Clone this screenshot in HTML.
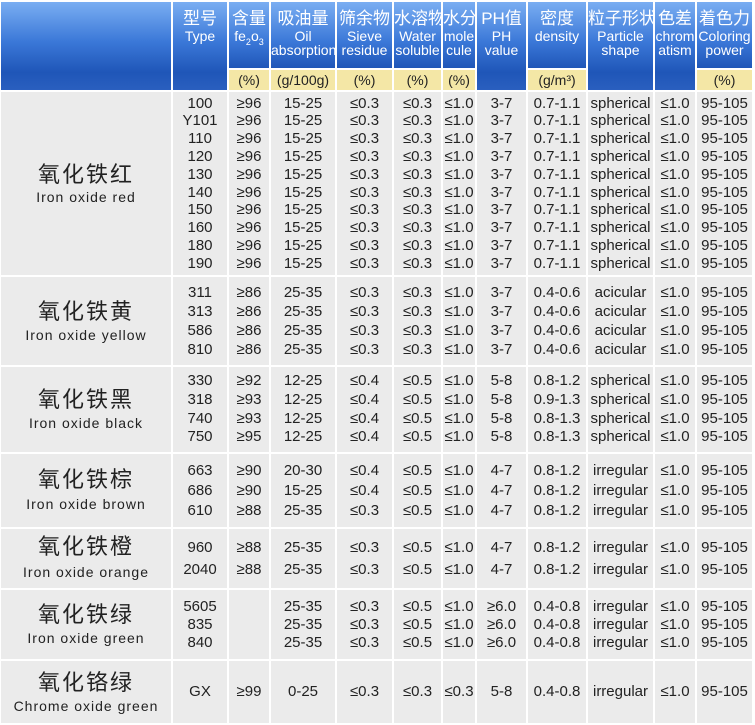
<!DOCTYPE html><html><head><meta charset="utf-8"><style>
body{margin:0;background:#fff;width:755px;height:724px;overflow:hidden}
table{width:755px;border-collapse:separate;border-spacing:2px;table-layout:fixed;font-family:"Liberation Sans","Noto Sans CJK SC",sans-serif;color:#222;font-size:15px;margin:0 0 0 -1px}
td{padding:0;text-align:center;vertical-align:middle;background:#ebebeb;white-space:nowrap;overflow:hidden}
.h td{background:linear-gradient(#7aaef2,#3b78d8 60%,#1f56b8);color:#fff;line-height:14px;font-size:14px;vertical-align:top;padding-top:6px}
.h td b{font-weight:normal;font-size:17px;display:block;line-height:21px}
.h td.tall{background:linear-gradient(#7aaef2 0,#3b78d8 45%,#1f56b8 80%,#2a5fbf)}
.u td{background:#f4e7a6;color:#222;font-size:14px}
.n b{display:block;font-weight:normal;font-size:22px;line-height:28px;letter-spacing:2px}
.n span{font-size:14px;letter-spacing:1px}
</style></head><body>
<table>
<colgroup><col style="width:170px"><col style="width:54px"><col style="width:40px"><col style="width:64px"><col style="width:55px"><col style="width:47px"><col style="width:32px"><col style="width:49px"><col style="width:58px"><col style="width:65px"><col style="width:40px"><col style="width:55px"></colgroup>
<tr class="h" style="height:66px"><td rowspan="2" class="tall"></td><td rowspan="2" class="tall"><b>型号</b>Type</td><td><b>含量</b>fe<sub style="font-size:9px">2</sub>o<sub style="font-size:9px">3</sub></td><td><b>吸油量</b>Oil<br>absorption</td><td><b>筛余物</b>Sieve<br>residue</td><td><b>水溶物</b>Water<br>soluble</td><td><b>水分</b>mole<br>cule</td><td rowspan="2" class="tall"><b>PH值</b>PH<br>value</td><td><b>密度</b>density</td><td rowspan="2" class="tall"><b>粒子形状</b>Particle<br>shape</td><td rowspan="2" class="tall"><b>色差</b>chrom<br>atism</td><td><b>着色力</b>Coloring<br>power</td></tr>
<tr class="u" style="height:20px"><td>(%)</td><td>(g/100g)</td><td>(%)</td><td>(%)</td><td>(%)</td><td>(g/m³)</td><td>(%)</td></tr>
<tr style="height:183px;line-height:17.8px"><td class="n"><b>氧化铁红</b><span>Iron oxide red</span></td><td>100<br>Y101<br>110<br>120<br>130<br>140<br>150<br>160<br>180<br>190</td><td>≥96<br>≥96<br>≥96<br>≥96<br>≥96<br>≥96<br>≥96<br>≥96<br>≥96<br>≥96</td><td>15-25<br>15-25<br>15-25<br>15-25<br>15-25<br>15-25<br>15-25<br>15-25<br>15-25<br>15-25</td><td>≤0.3<br>≤0.3<br>≤0.3<br>≤0.3<br>≤0.3<br>≤0.3<br>≤0.3<br>≤0.3<br>≤0.3<br>≤0.3</td><td>≤0.3<br>≤0.3<br>≤0.3<br>≤0.3<br>≤0.3<br>≤0.3<br>≤0.3<br>≤0.3<br>≤0.3<br>≤0.3</td><td>≤1.0<br>≤1.0<br>≤1.0<br>≤1.0<br>≤1.0<br>≤1.0<br>≤1.0<br>≤1.0<br>≤1.0<br>≤1.0</td><td>3-7<br>3-7<br>3-7<br>3-7<br>3-7<br>3-7<br>3-7<br>3-7<br>3-7<br>3-7</td><td>0.7-1.1<br>0.7-1.1<br>0.7-1.1<br>0.7-1.1<br>0.7-1.1<br>0.7-1.1<br>0.7-1.1<br>0.7-1.1<br>0.7-1.1<br>0.7-1.1</td><td>spherical<br>spherical<br>spherical<br>spherical<br>spherical<br>spherical<br>spherical<br>spherical<br>spherical<br>spherical</td><td>≤1.0<br>≤1.0<br>≤1.0<br>≤1.0<br>≤1.0<br>≤1.0<br>≤1.0<br>≤1.0<br>≤1.0<br>≤1.0</td><td>95-105<br>95-105<br>95-105<br>95-105<br>95-105<br>95-105<br>95-105<br>95-105<br>95-105<br>95-105</td></tr>
<tr style="height:88px;line-height:19px"><td class="n"><b>氧化铁黄</b><span>Iron oxide yellow</span></td><td>311<br>313<br>586<br>810</td><td>≥86<br>≥86<br>≥86<br>≥86</td><td>25-35<br>25-35<br>25-35<br>25-35</td><td>≤0.3<br>≤0.3<br>≤0.3<br>≤0.3</td><td>≤0.3<br>≤0.3<br>≤0.3<br>≤0.3</td><td>≤1.0<br>≤1.0<br>≤1.0<br>≤1.0</td><td>3-7<br>3-7<br>3-7<br>3-7</td><td>0.4-0.6<br>0.4-0.6<br>0.4-0.6<br>0.4-0.6</td><td>acicular<br>acicular<br>acicular<br>acicular</td><td>≤1.0<br>≤1.0<br>≤1.0<br>≤1.0</td><td>95-105<br>95-105<br>95-105<br>95-105</td></tr>
<tr style="height:85px;line-height:18.7px"><td class="n"><b>氧化铁黑</b><span>Iron oxide black</span></td><td>330<br>318<br>740<br>750</td><td>≥92<br>≥93<br>≥93<br>≥95</td><td>12-25<br>12-25<br>12-25<br>12-25</td><td>≤0.4<br>≤0.4<br>≤0.4<br>≤0.4</td><td>≤0.5<br>≤0.5<br>≤0.5<br>≤0.5</td><td>≤1.0<br>≤1.0<br>≤1.0<br>≤1.0</td><td>5-8<br>5-8<br>5-8<br>5-8</td><td>0.8-1.2<br>0.9-1.3<br>0.8-1.3<br>0.8-1.3</td><td>spherical<br>spherical<br>spherical<br>spherical</td><td>≤1.0<br>≤1.0<br>≤1.0<br>≤1.0</td><td>95-105<br>95-105<br>95-105<br>95-105</td></tr>
<tr style="height:73px;line-height:20px"><td class="n"><b>氧化铁棕</b><span>Iron oxide brown</span></td><td>663<br>686<br>610</td><td>≥90<br>≥90<br>≥88</td><td>20-30<br>15-25<br>25-35</td><td>≤0.4<br>≤0.4<br>≤0.3</td><td>≤0.5<br>≤0.5<br>≤0.5</td><td>≤1.0<br>≤1.0<br>≤1.0</td><td>4-7<br>4-7<br>4-7</td><td>0.8-1.2<br>0.8-1.2<br>0.8-1.2</td><td>irregular<br>irregular<br>irregular</td><td>≤1.0<br>≤1.0<br>≤1.0</td><td>95-105<br>95-105<br>95-105</td></tr>
<tr style="height:59px;line-height:22px"><td class="n"><b>氧化铁橙</b><span>Iron oxide orange</span></td><td>960<br>2040</td><td>≥88<br>≥88</td><td>25-35<br>25-35</td><td>≤0.3<br>≤0.3</td><td>≤0.5<br>≤0.5</td><td>≤1.0<br>≤1.0</td><td>4-7<br>4-7</td><td>0.8-1.2<br>0.8-1.2</td><td>irregular<br>irregular</td><td>≤1.0<br>≤1.0</td><td>95-105<br>95-105</td></tr>
<tr style="height:69px;line-height:18px"><td class="n"><b>氧化铁绿</b><span>Iron oxide green</span></td><td>5605<br>835<br>840</td><td></td><td>25-35<br>25-35<br>25-35</td><td>≤0.3<br>≤0.3<br>≤0.3</td><td>≤0.5<br>≤0.5<br>≤0.5</td><td>≤1.0<br>≤1.0<br>≤1.0</td><td>≥6.0<br>≥6.0<br>≥6.0</td><td>0.4-0.8<br>0.4-0.8<br>0.4-0.8</td><td>irregular<br>irregular<br>irregular</td><td>≤1.0<br>≤1.0<br>≤1.0</td><td>95-105<br>95-105<br>95-105</td></tr>
<tr style="height:62px;line-height:18px"><td class="n"><b>氧化铬绿</b><span>Chrome oxide green</span></td><td>GX</td><td>≥99</td><td>0-25</td><td>≤0.3</td><td>≤0.3</td><td>≤0.3</td><td>5-8</td><td>0.4-0.8</td><td>irregular</td><td>≤1.0</td><td>95-105</td></tr>
</table>
</body></html>
